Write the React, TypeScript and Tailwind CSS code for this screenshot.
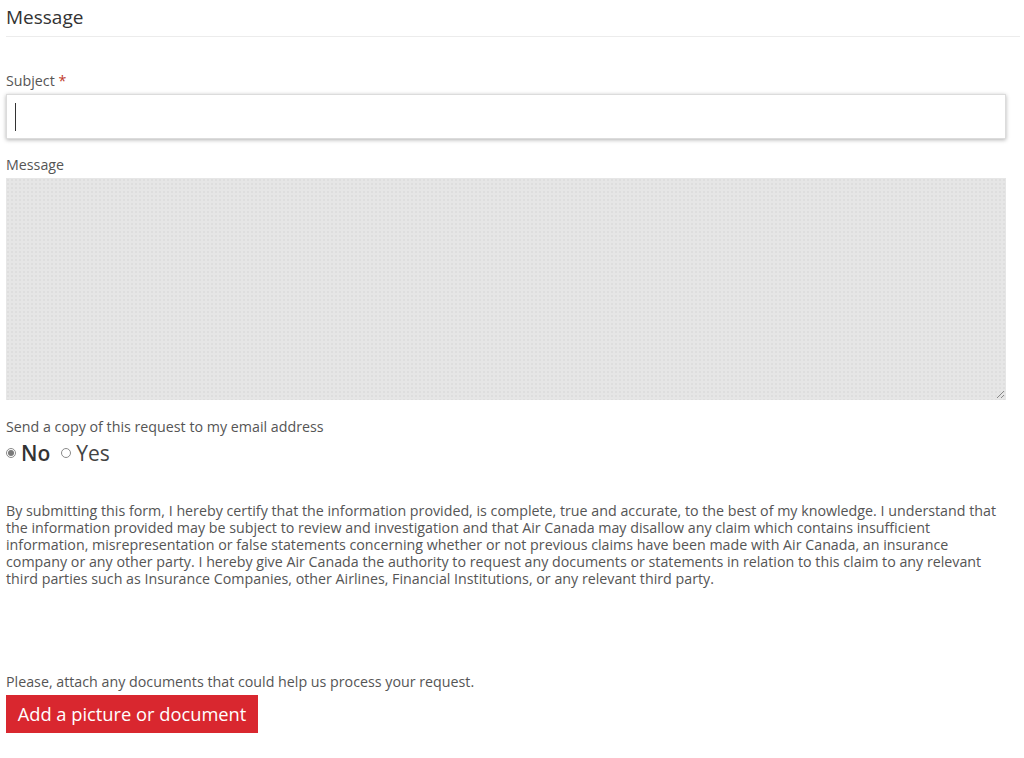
import React from "react";

const font = { fontFamily: '"Open Sans", "Liberation Sans", sans-serif' };

function Radio({ checked }: { checked?: boolean }) {
  return (
    <span className="flex h-[10px] w-[10px] items-center justify-center rounded-full border border-[#8a8a8a] bg-white">
      {checked && <span className="h-[6px] w-[6px] rounded-full bg-[#7a7a7a]" />}
    </span>
  );
}

export default function App() {
  return (
    <div className="min-h-[758px] bg-white px-[6px] text-[#555]" style={font}>
      {/* Section header */}
      <div className="w-[1014px] border-b border-[#ececec] pt-[3px] pb-[5px]">
        <h2 className="text-[19px] leading-[28px] text-[#333]">Message</h2>
      </div>

      <div className="w-[1000px]">
        {/* Subject */}
        <label className="mt-[34px] block text-[14.25px] leading-[20px] text-[#555]">
          Subject <span className="text-[#c0392b]">*</span>
        </label>
        <div className="mt-[3px] flex h-[45px] items-center border border-[#dcdcdc] bg-white px-[8px] shadow-[0_1px_4px_rgba(0,0,0,0.3)]">
          <span className="h-[28px] w-px bg-[#333]" />
        </div>

        {/* Message */}
        <label className="mt-[16px] block text-[14.25px] leading-[20px] text-[#555]">
          Message
        </label>
        <div className="relative mt-[3px] h-[222px] bg-[#e6e6e6] bg-[image:radial-gradient(#dedede_1px,transparent_1px)] bg-[size:4px_4px]">
          <svg className="absolute bottom-[1px] right-[1px]" width="9" height="9" viewBox="0 0 9 9">
            <path d="M8 1L1 8M8 5L5 8" stroke="#888" strokeWidth="1" />
          </svg>
        </div>

        {/* Copy */}
        <p className="mt-[17px] text-[14.25px] leading-[20px] text-[#555]">
          Send a copy of this request to my email address
        </p>
        <div className="mt-[3px] flex items-center text-[21px] leading-[26px]">
          <Radio checked />
          <span className="ml-[5px] font-semibold text-[#333]">No</span>
          <span className="ml-[11px]">
            <Radio />
          </span>
          <span className="ml-[5px] text-[#444]">Yes</span>
        </div>

        {/* Legal */}
        <p className="mt-[36px] text-[14.25px] leading-[17px] text-[#555]">
          By submitting this form, I hereby certify that the information provided, is complete, true and accurate, to the best of my knowledge. I understand that
          <br />
          the information provided may be subject to review and investigation and that Air Canada may disallow any claim which contains insufficient
          <br />
          information, misrepresentation or false statements concerning whether or not previous claims have been made with Air Canada, an insurance
          <br />
          company or any other party. I hereby give Air Canada the authority to request any documents or statements in relation to this claim to any relevant
          <br />
          third parties such as Insurance Companies, other Airlines, Financial Institutions, or any relevant third party.
        </p>

        {/* Attach */}
        <p className="mt-[85px] text-[14.25px] leading-[20px] text-[#555]">
          Please, attach any documents that could help us process your request.
        </p>
        <button className="mt-[3px] h-[38px] w-[252px] bg-[#d9272f] text-[18.3px] text-white" style={font}>
          Add a picture or document
        </button>
      </div>
    </div>
  );
}
